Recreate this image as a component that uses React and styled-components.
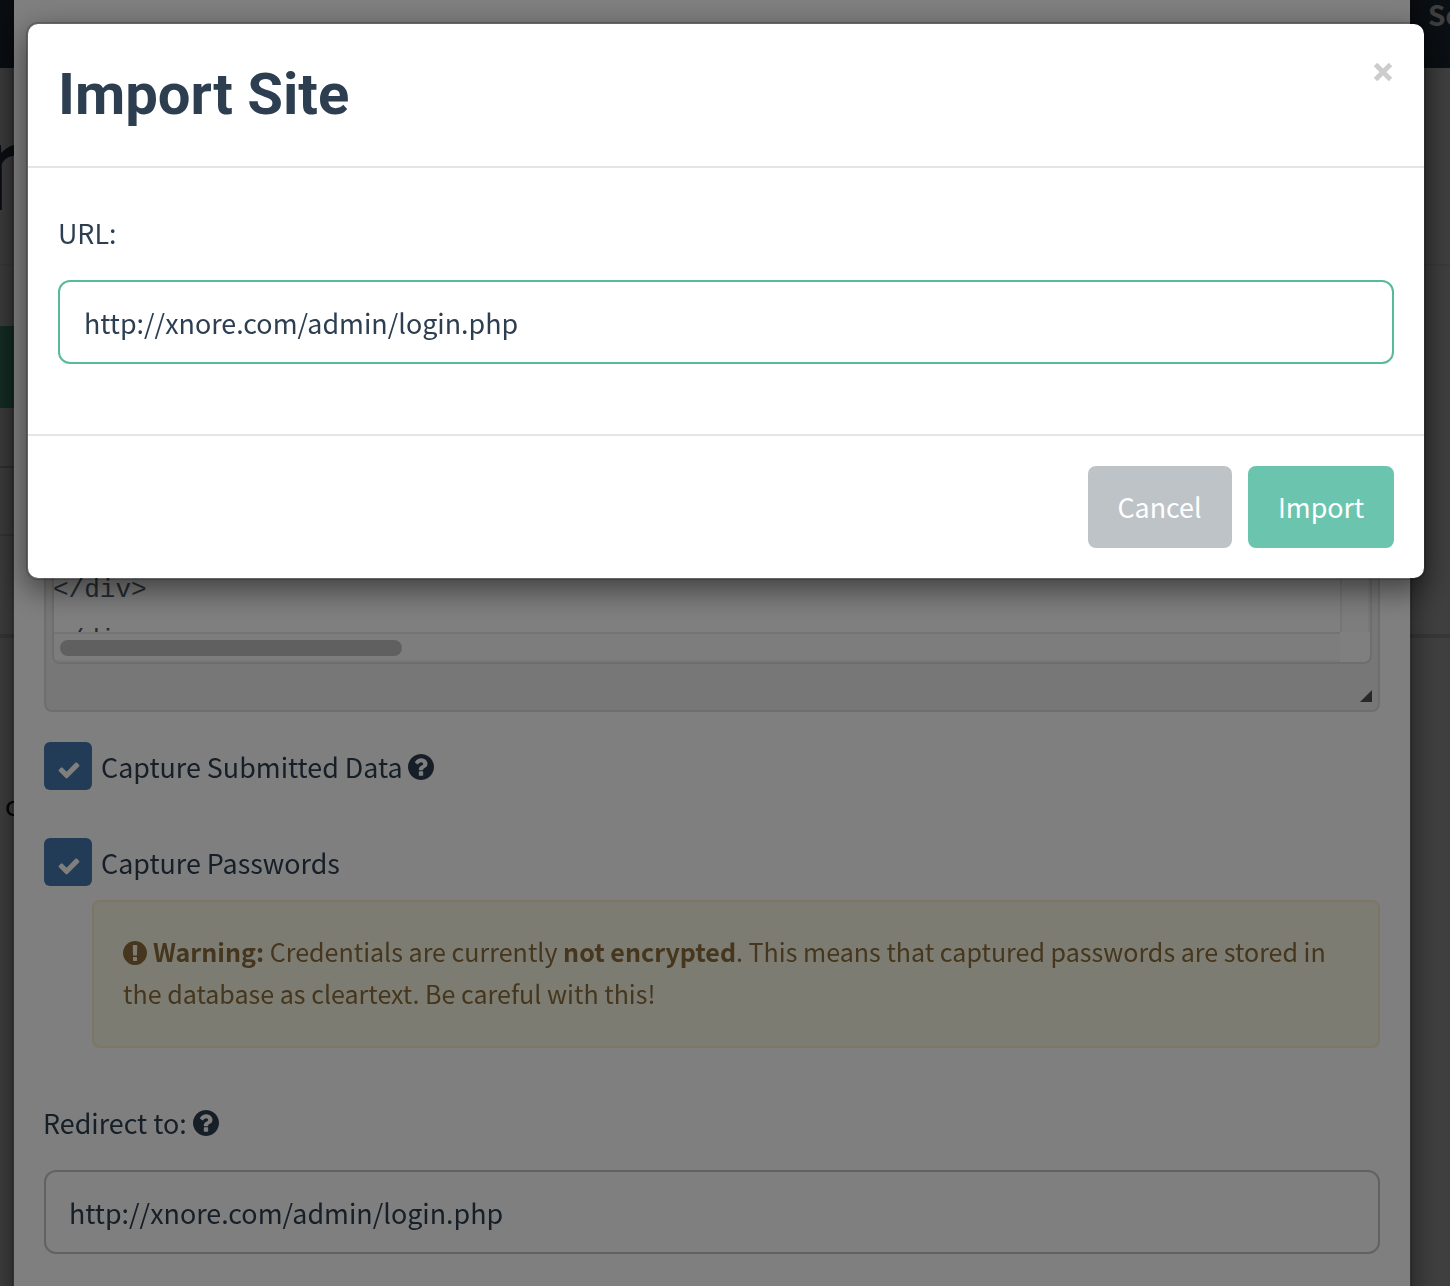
import React from "react";
import styled, { createGlobalStyle } from "styled-components";

const GlobalStyle = createGlobalStyle`
  *, *::before, *::after { box-sizing: border-box; }
  html, body { margin: 0; height: 1286px; overflow: hidden; }
  body {
    background: #fff;
    color: #2c3e50;
    font-family: "Noto Sans CJK SC", "Noto Sans", sans-serif;
    font-size: 26.87px;
    line-height: 42px;
  }
`;

const Page = styled.div`
  height: 1286px;
  width: 1450px;
  overflow: hidden;
`;

const NavBar = styled.nav`
  height: 68px;
  padding-left: 1428px;
  background: #2c3e50;
  color: #fff;
  font-size: 28px;
  font-weight: 700;
  line-height: 29px;
  white-space: nowrap;
  overflow: hidden;
`;

const PageTitle = styled.h1`
  margin: 0;
  height: 198px;
  padding-top: 28px;
  border-bottom: 2px solid #eee;
  font: 500 123px/144px Roboto, sans-serif;
  text-indent: -20px;
  overflow: hidden;
`;

const ActionBar = styled.div`
  height: 202px;
  padding-top: 60px;
  border-bottom: 2px solid #ccc;
  width: 30px;
`;

const NewButton = styled.div`
  height: 82px;
  background: #59b99b;
`;

const ListRow = styled.div`
  height: ${(p) => p.$height}px;
  border-bottom: ${(p) => p.$line}px solid #ddd;
  width: ${(p) => (p.$full ? "100%" : "30px")};
`;

const PageText = styled.div`
  padding: 146px 0 0 5px;
  color: #111;
`;

const Backdrop = styled.div`
  position: fixed;
  inset: 0;
  background: rgba(0, 0, 0, 0.5);
`;

const Dialog = styled.section`
  position: fixed;
  top: ${(p) => p.$top}px;
  left: ${(p) => p.$left}px;
  width: 1400px;
  height: ${(p) => p.$height}px;
  background: #fff;
  background-clip: padding-box;
  border: 2px solid rgba(0, 0, 0, 0.2);
  border-radius: 12px;
  box-shadow: 0 10px 30px rgba(0, 0, 0, 0.5);
`;

const FormBody = styled.div`
  height: 100%;
  padding: 500px 30px 0;
  display: flex;
  flex-direction: column;
`;

const Editor = styled.div`
  flex: none;
  height: 252px;
  padding: 0 6px 0 6px;
  background: #efefef;
  border: 2px solid #dcdcdc;
  border-radius: 8px;
  display: flex;
  flex-direction: column;
`;

const EditorPane = styled.div`
  height: 202px;
  border: 2px solid #dcdcdc;
  border-radius: 8px;
  background: #fff;
  overflow: hidden;
  display: grid;
  grid-template-columns: 1fr 30px;
  grid-template-rows: 1fr 30px;
`;

const Source = styled.pre`
  margin: 0;
  overflow: hidden;
  display: flex;
  flex-direction: column;
  justify-content: flex-end;
  font: 26px/50px "Liberation Mono", monospace;
  color: #4a5866;
  text-indent: -1px;

  span:last-child { margin-bottom: -33px; }
`;

const ScrollY = styled.div`
  background: #fafafa;
  border-left: 2px solid #ececec;
  border-right: 2px solid #f0f0f0;
`;

const ScrollX = styled.div`
  background: #fafafa;
  border-top: 2px solid #e8e8e8;
  border-bottom: 2px solid #f0f0f0;
  padding: 6px 6px 0;
`;

const Thumb = styled.div`
  width: 342px;
  height: 16px;
  border-radius: 8px;
  background: #c1c1c1;
`;

const GripRow = styled.div`
  flex: 1;
  display: flex;
  justify-content: flex-end;
  align-items: flex-end;
  padding-bottom: 8px;
`;

const Grip = styled.div`
  width: 12px;
  height: 12px;
  background: #505050;
  clip-path: polygon(100% 0, 100% 100%, 0 100%);
`;

const CheckRow = styled.label`
  flex: none;
  display: flex;
  height: 48px;
  margin-top: ${(p) => p.$gap}px;
`;

const CheckBox = styled.span`
  width: 48px;
  height: 48px;
  margin-right: 9px;
  padding: 7px 0 0 1px;
  border-radius: 6px;
  background: #4478b0;
  color: #fff;
  display: flex;
  align-items: center;
  justify-content: center;
`;

const Caption = styled.span`
  display: flex;
  align-items: center;
  height: 50px;
  white-space: pre;
  gap: 5.5px;
`;

const Alert = styled.div`
  flex: none;
  height: 148px;
  margin: 14px 0 0 48px;
  padding: 28px 29px;
  background: #faf8e5;
  border: 2px solid #faebcc;
  border-radius: 8px;
  color: #8a6d3b;
  font-size: 25.06px;
  line-height: 42px;
  white-space: nowrap;

  svg { vertical-align: -3px; margin-right: 6px; }
`;

const RedirectLabel = styled.label`
  flex: none;
  display: flex;
  align-items: center;
  gap: 6px;
  height: 42px;
  margin: 54px 0 26px -1px;
`;

const UrlLabel = styled.label`
  display: block;
  height: 42px;
  margin-bottom: 26px;
`;

const TextInput = styled.input`
  display: block;
  flex: none;
  width: 100%;
  height: 84px;
  padding: 0 24px 0 ${(p) => (p.$active ? 24 : 23)}px;
  border: 2px solid ${(p) => (p.$active ? "#59b99b" : "#c3c6c5")};
  border-radius: 12px;
  background: #fff;
  color: #2c3e50;
  font: inherit;
  outline: none;
`;

const Header = styled.header`
  height: 144px;
  padding: 30px;
  border-bottom: 2px solid #e5e5e5;
  display: flex;
  justify-content: space-between;
`;

const Title = styled.h4`
  margin: 0;
  font: 700 58px/80px Roboto, sans-serif;
`;

const CloseButton = styled.button`
  width: 22px;
  height: 36px;
  padding: 0;
  border: 0;
  background: none;
  color: #ccc;
`;

const Body = styled.div`
  height: 266px;
  padding: 44px 30px 0;
`;

const Footer = styled.footer`
  height: 144px;
  padding: 30px;
  border-top: 2px solid #e5e5e5;
  display: flex;
  justify-content: flex-end;
  gap: 16px;
`;

const Button = styled.button`
  width: ${(p) => p.$width}px;
  height: 82px;
  padding: 0 ${(p) => (p.$primary ? 0 : 1)}px 0 0;
  border: 0;
  border-radius: 8px;
  background: ${(p) => (p.$primary ? "#6bc4ae" : "#bdc3c7")};
  color: #fff;
  font: inherit;
`;

const QuestionIcon = () => (
  <svg width="26" height="26" viewBox="128 128 1536 1536" fill="currentColor">
    <path d="M1024 1376v-192q0-14-9-23t-23-9h-192q-14 0-23 9t-9 23v192q0 14 9 23t23 9h192q14 0 23-9t9-23zm256-672q0-88-55.500-163t-138.500-116-170-41q-243 0-371 213-15 24 8 42l132 100q7 6 19 6 16 0 25-12 53-68 86-92 34-24 86-24 48 0 85.500 26t37.500 59q0 38-20 61t-68 45q-63 28-115.500 86.500t-52.500 125.500v36q0 14 9 23t23 9h192q14 0 23-9t9-23q0-19 21.500-49.500t54.500-49.500q32-18 49-28.500t46-35 44.500-48 28-60.500 12.500-81zm384 192q0 209-103 385.500t-279.500 279.500-385.500 103-385.500-103-279.500-279.500-103-385.500 103-385.500 279.500-279.500 385.500-103 385.500 103 279.500 279.500 103 385.500z" />
  </svg>
);

const ExclamationIcon = () => (
  <svg width="24" height="24" viewBox="128 128 1536 1536" fill="currentColor">
    <path d="M896 128q209 0 385.500 103t279.500 279.500 103 385.500-103 385.500-279.500 279.500-385.500 103-385.500-103-279.500-279.500-103-385.500 103-385.500 279.500-279.500 385.500-103zm128 1247v-190q0-14-9-23.500t-22-9.500h-192q-13 0-23 10t-10 23v190q0 13 10 23t23 10h192q13 0 22-9.500t9-23.500zm-2-344l18-621q0-12-10-18-10-8-24-8h-220q-14 0-24 8-10 6-10 18l17 621q0 10 10 17.500t24 7.500h185q14 0 23.500-7.500t10.500-17.500z" />
  </svg>
);

const CheckIcon = () => (
  <svg width="24" height="24" viewBox="0 0 1792 1792" fill="currentColor">
    <path d="M1671 566q0 40-28 68l-724 724-136 136q-28 28-68 28t-68-28l-136-136-362-362q-28-28-28-68t28-68l136-136q28-28 68-28t68 28l294 295 656-657q28-28 68-28t68 28l136 136q28 28 28 68z" />
  </svg>
);

const CloseIcon = () => (
  <svg width="22" height="36" viewBox="0 0 22 36" fill="none" stroke="currentColor" strokeWidth="4.8">
    <path d="M3.500 10.500 L18.500 25.500 M18.500 10.500 L3.500 25.500" />
  </svg>
);

export default function App() {
  return (
    <>
      <GlobalStyle />
      <Page>
        <NavBar>Settings</NavBar>
        <PageTitle>n</PageTitle>
        <ActionBar><NewButton /></ActionBar>
        <ListRow $height={68} $line={2} />
        <ListRow $height={102} $line={4} $full />
        <PageText>c</PageText>
      </Page>
      <Backdrop />
      <Dialog $top={-42} $left={12} $height={1500}>
        <FormBody>
          <Editor>
            <EditorPane>
              <Source>
                <span>&lt;/div&gt;</span>
                <span>&lt;/div&gt;</span>
              </Source>
              <ScrollY />
              <ScrollX><Thumb /></ScrollX>
            </EditorPane>
            <GripRow><Grip /></GripRow>
          </Editor>
          <CheckRow $gap={30}>
            <CheckBox><CheckIcon /></CheckBox>
            <Caption>Capture Submitted Data<QuestionIcon /></Caption>
          </CheckRow>
          <CheckRow $gap={48}>
            <CheckBox><CheckIcon /></CheckBox>
            <Caption>Capture Passwords</Caption>
          </CheckRow>
          <Alert>
            <ExclamationIcon />
            <b>Warning:</b> Credentials are currently <b>not encrypted</b>. This means that captured passwords are stored in
            <br />
            the database as cleartext. Be careful with this!
          </Alert>
          <RedirectLabel>Redirect to:<QuestionIcon /></RedirectLabel>
          <TextInput defaultValue="http://xnore.com/admin/login.php" />
        </FormBody>
      </Dialog>
      <Backdrop />
      <Dialog $top={22} $left={26} $height={558}>
        <Header>
          <Title>Import Site</Title>
          <CloseButton aria-label="Close"><CloseIcon /></CloseButton>
        </Header>
        <Body>
          <UrlLabel>URL:</UrlLabel>
          <TextInput $active defaultValue="http://xnore.com/admin/login.php" />
        </Body>
        <Footer>
          <Button $width={144}>Cancel</Button>
          <Button $width={146} $primary>Import</Button>
        </Footer>
      </Dialog>
    </>
  );
}
